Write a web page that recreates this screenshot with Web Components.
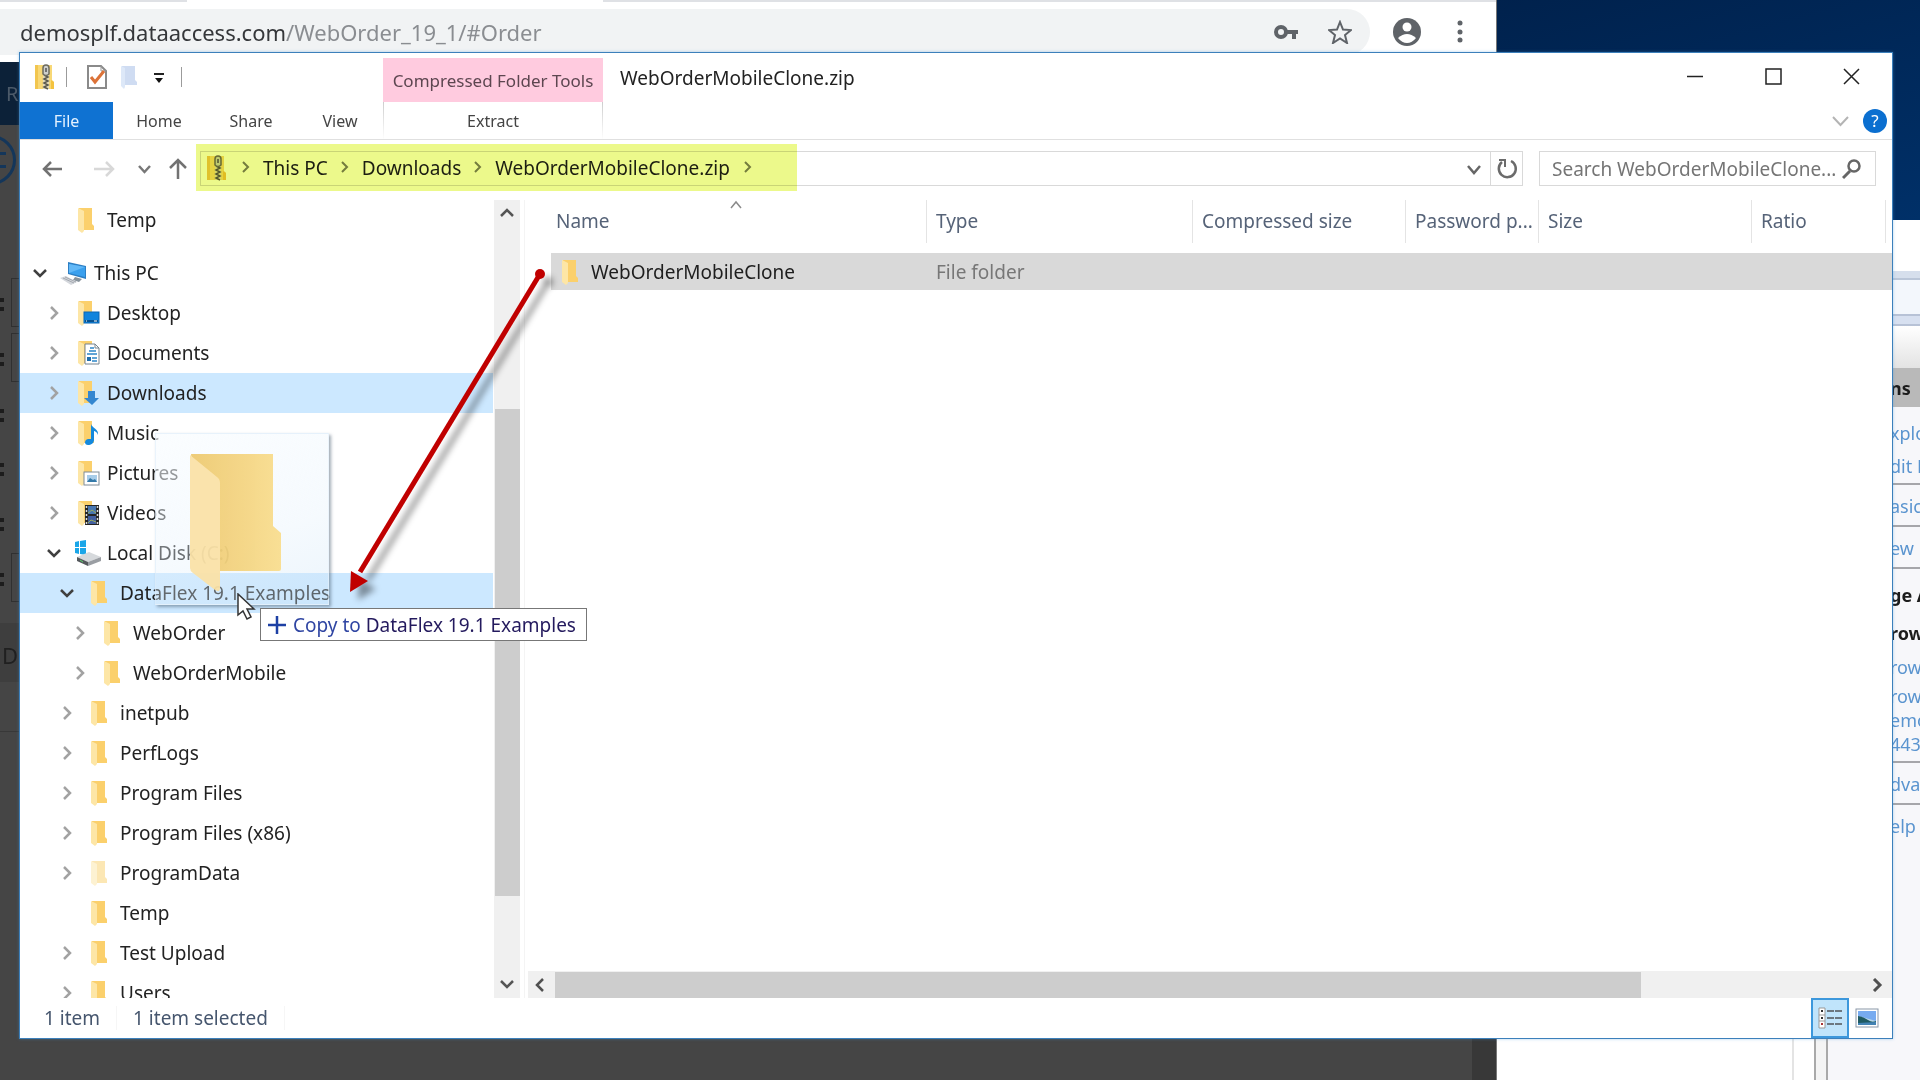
<!DOCTYPE html>
<html lang="en">
<head>
<meta charset="utf-8">
<title>WebOrderMobileClone.zip</title>
<style>
html, body { margin: 0; height: 100%; overflow: hidden; }
body { font-family: "Noto Sans", "Open Sans", sans-serif; font-size: 19px; line-height: 24px; color: #222; }
</style>
</head>
<body>
<desk-top></desk-top>
<script>
const define = (name, css, html) => {
  customElements.define(name, class extends HTMLElement {
    constructor() {
      super();
      const root = this.attachShadow({ mode: "open" });
      const t = document.createElement("template");
      t.innerHTML = `<style>*{box-sizing:border-box}button{font:inherit;color:inherit;background:none;border:0;padding:0;margin:0;text-align:left}:host{display:block}${css}</style>` + html;
      root.append(t.content.cloneNode(true));
    }
  });
};

const folderBase = `<path d="M4 1h13v16l2 2v4H4z" fill="#fbd06c"/><path d="M3 1l6 3v20l-2 2-4-3z" fill="#fde6a6"/>`;
const wrap = (w, h, s) => `<svg width="${w}" height="${h}" viewBox="0 0 ${w} ${h}" fill="none" aria-hidden="true">${s}</svg>`;
const zipShape = `<path d="M0 1h17v15l2 2v7H0z" fill="#f8d876"/><path d="M0 1h3v24H0z" fill="#f2c64f"/><path d="M16 16l3 2v7h-3z" fill="#f4c33f"/><path d="M8 3h6v22H8z" fill="#e6dcb8"/><path d="M9 11l4 2-4 2 4 2-4 2 4 2-4 2 4 2" stroke="#5c5a50" stroke-width="1.500"/><path d="M8 10V4q0-3 3-3t3 3v6q-3 3-6 0z" fill="#cfd0cc" stroke="#6e6c60" stroke-width="1.500"/><path d="M11 4v4" stroke="#555" stroke-width="1.500"/>`;
const icons = {
  folder: wrap(26, 26, folderBase),
  pale: wrap(26, 26, `<g opacity=".5">${folderBase}</g>`),
  desktop: wrap(26, 26, folderBase + `<rect x="9" y="12" width="15" height="11" fill="#0f84dd" stroke="#0a66b3"/><path d="M10 21h13" stroke="#07518f" stroke-width="2"/><path d="M11 21h1m7 0h3" stroke="#fff"/>`),
  documents: wrap(26, 26, folderBase + `<path d="M10 4h10l4 4v16H10z" fill="#fff" stroke="#77848f"/><path d="M20 4v4h4" stroke="#77848f"/><path d="M15 8h4m-5 3h7m-9 3h10m-5 4h5m-5 3h5" stroke="#2c87c9" stroke-width="1.500"/><rect x="12" y="17" width="4" height="4" fill="#1f6fae"/>`),
  downloads: wrap(26, 26, folderBase + `<path d="M13 11h7v7h4l-7 7-8-7h4z" fill="#3386d0"/>`),
  music: wrap(26, 26, folderBase + `<path d="M16 4c1 4 8 5 7 11-1-3-3-4-4-4v9c0 3-3 5-6 5-4 0-4-5 0-6l3 0z" fill="#1489dd"/>`),
  pictures: wrap(26, 26, folderBase + `<rect x="9" y="12" width="15" height="13" fill="#fff" stroke="#7f8b96"/><rect x="12" y="15" width="10" height="7" fill="#a8cde9"/><path d="M12 22l3-4 3 2 2-1 2 3z" fill="#357aa9"/>`),
  videos: wrap(26, 26, folderBase + `<rect x="10" y="5" width="14" height="20" fill="#252525"/><rect x="13" y="6" width="8" height="8" fill="#4876b0"/><rect x="13" y="16" width="8" height="8" fill="#425fa0"/><path d="M11.500 6v19M22.500 6v19" stroke="#ddd" stroke-width="1.500" stroke-dasharray="2 2"/><path d="M13 13l4-3 4 3M13 23l3-3 5 2" stroke="#98ad5c"/>`),
  pc: wrap(26, 26, `<path d="M8 2l18 4v13L8 14z" fill="#2d7fc4"/><path d="M9 4l16 3v10L9 13z" fill="#3aa0ee"/><path d="M9 4l16 3-16 6z" fill="#62b8f7"/><path d="M15 17l7 2-3 3-6-2z" fill="#87929b"/><path d="M0 18l6-2 11 6-6 3z" fill="#d4d7dc"/><path d="M3 18l11 5M5 17l11 5" stroke="#a4a9b0"/>`),
  disk: wrap(26, 26, `<path d="M0 2l4-1v6H0zM5 1l6-1v7H5zM0 8h4v6l-4-1zM5 8h6v7l-6-1z" fill="#1ba6e8"/><path d="M2 17l12-5 12 5-13 5z" fill="#d6d9dc"/><path d="M2 17l11 5v4L2 21z" fill="#55595d"/><path d="M13 22l13-5v4l-13 5z" fill="#9a9ea3"/><path d="M5 20l3 2" stroke="#57d36b"/>`),
  zip: wrap(20, 26, zipShape),
  none: "",
  right: wrap(16, 16, `<path d="M5 2l6 6-6 6" stroke="#a2a2a2" stroke-width="2.500"/>`),
  crumb: wrap(12, 14, `<path d="M3 1l5 5-5 5" stroke="#7d7f70" stroke-width="2"/>`),
  down: wrap(16, 16, `<path d="M2 5l6 6 6-6" stroke="#404040" stroke-width="2.500"/>`)
};
customElements.define("x-icon", class extends HTMLElement {
  constructor() { super(); this.attachShadow({ mode: "open" }); }
  connectedCallback() {
    this.shadowRoot.innerHTML = `<style>:host{display:inline-flex;flex:none}svg{display:block}</style>` + icons[this.getAttribute("name")];
  }
});

/* ---- browser window behind ---- */
define("web-browser", `
:host{display:flex;flex-direction:column;background:#454545;border-right:1px solid #777}
.strip{height:2px;background:linear-gradient(90deg,#dfe1e5 187px,#fff 187px 603px,#dfe1e5 603px)}
.bar{display:flex;align-items:center;height:60px;background:#fff;padding:0 28px 0 0}
.omni{flex:1;display:flex;align-items:center;height:46px;background:#f1f3f4;border-radius:0 23px 23px 0;padding:0 18px 0 20px;font-size:22px;line-height:32px;color:#8a8d91;gap:30px}
.omni a{color:inherit;text-decoration:none;flex:1}.omni b{font-weight:400;color:#35373a}
.omni svg,.tools svg{display:block}
.tools{display:flex;align-items:center;gap:31px;margin-left:23px}
.nav{height:63px;background:#0c2138;color:#4c5a69;font-size:20px;line-height:63px;padding-left:6px}
.page{flex:1;position:relative;color:#202020;font-weight:700;overflow:hidden}
.round{position:absolute;left:-34px;top:10px;width:50px;height:50px;border:3px solid #14365a;border-radius:50%}
.bars{position:absolute;left:0;top:27px;width:6px;height:16px;border:solid #14365a;border-width:3px 0}
.page i{position:absolute;left:0;width:4px;height:13px;border:solid #1c1c1c;border-width:4px 0}
.page u{position:absolute;left:11px;width:40px;border:1px solid #303030;height:49px}
.band{position:absolute;left:0;top:498px;width:20px;height:59px;background:#3e3e3e}
.line{position:absolute;left:0;top:606px;width:20px;height:1px;background:#383838}
.d{position:absolute;left:2px;top:516px;font-weight:400;font-size:22px;line-height:28px}
.side{position:absolute;right:0;top:0;bottom:0;width:24px;background:#383838}`,
`<div class="strip"></div>
<div class="bar"><div class="omni"><a href="#Order"><b>demosplf.dataaccess.com</b>/WebOrder_19_1/#Order</a>
${wrap(24, 24, `<circle cx="7" cy="12" r="5" stroke="#5f6368" stroke-width="4"/><path d="M12 12h12M20 12v7" stroke="#5f6368" stroke-width="4"/>`)}
${wrap(24, 24, `<path d="M12 2l3 7.500 8 .6-6 5 2 7.900-7-4.500L5 23l2-7.900-6-5 8-.6z" stroke="#5f6368" stroke-width="2"/>`)}
</div><div class="tools">
${wrap(28, 28, `<circle cx="14" cy="14" r="14" fill="#5f6368"/><circle cx="14" cy="9" r="4.500" fill="#fff"/><path d="M5 20q9-8 18 0-4 5-9 5t-9-5z" fill="#fff"/>`)}
${wrap(16, 28, `<circle cx="8" cy="5" r="2.500" fill="#5f6368"/><circle cx="8" cy="14" r="2.500" fill="#5f6368"/><circle cx="8" cy="22" r="2.500" fill="#5f6368"/>`)}
</div></div>
<div class="nav">R</div>
<div class="page"><div class="round"></div><div class="bars"></div>
${[173, 228, 284, 338, 393, 448].map(y => `<i style="top:${y}px"></i>`).join("")}
${[153, 208, 428].map(y => `<u style="top:${y}px"></u>`).join("")}
<div class="band"></div><div class="line"></div><div class="d">D</div><div class="side"></div></div>`);

/* ---- server manager window behind ---- */
define("action-pane", `
:host{display:flex;flex-direction:column;background:#fff;font-size:18px;line-height:24px;color:#5a94cf}
.cap{height:51px}.tool{height:9px;background:#d6dfec;border-bottom:2px solid #bac6d8}
.path{height:34px;background:#f3f7fc}.gap{height:12px;background:#d7e0f0;border:solid #b7c2d6;border-width:2px 0}
.body{flex:1;display:flex}
.center{flex:1;background:#fff;border-right:2px solid #e4e4e4;margin-right:20px}
.split{width:14px;background:#f4f4f4;border:solid #a9a9a9;border-width:0 2px}
.act{width:92px;background:#f7f7fa;display:flex;flex-direction:column}
.grad{height:42px;background:linear-gradient(#fff,#e3e3e3)}
.head{height:39px;background:#b9b9b9;line-height:41px;margin-bottom:10px}
.act>*{padding-left:62px;white-space:nowrap;overflow:hidden;flex:none}
.act a{color:inherit;text-decoration:none;display:block}
strong{color:#1c1c1c;display:block}
.sep{border-top:2px solid #a6a6aa}
.tall{height:42px;line-height:42px}.mid{height:33px;line-height:33px}
.sub{height:54px;line-height:52px}.brow{margin-bottom:6px}
.last{margin-bottom:5px}`,
`<div class="cap"></div><div class="tool"></div><div class="path"></div><div class="gap"></div>
<div class="body"><div class="center"></div><div class="split"></div>
<div class="act"><div class="grad"></div><strong class="head">ns</strong>
<a class="mid" href="#e">xplo</a><a class="mid" href="#p">dit P</a>
<a class="tall sep" href="#b">asic</a><a class="tall sep" href="#v">ew</a>
<strong class="sub sep">ge A</strong><strong class="brow">row</strong>
<a class="mid" href="#1">row</a><a href="#2">row</a><a href="#2">emo</a><a class="last" href="#2">443</a>
<a class="tall sep" href="#a">dva</a><a class="tall sep" href="#h">elp</a></div></div>`);

/* ---- explorer ---- */
define("ribbon-bar", `
:host{border-bottom:1px solid #e0e0e0}
.title{display:flex;height:49px}
.quick{width:363px;display:flex;align-items:center;padding:0 0 2px 15px}
.quick i{width:1px;height:20px;background:#9b9b9b;flex:none}
.quick i:first-of-type{margin:0 19px 0 11px}.quick i:last-of-type{margin-left:16px}
.quick .new{margin:0 15px 0 12px}
.tool{width:220px;background:#ffcbdf;margin-top:5px;font-size:17px;line-height:46px;text-align:center;color:#5d4650}
h1{flex:1;margin:0 0 0 17px;font:inherit;line-height:50px;color:#222}
.win{display:flex;align-items:center;padding:0 32px 0 0;gap:61px}
.tabs{display:flex;height:37px;font-size:16px;color:#444}
.tabs button{width:92px;text-align:center;line-height:38px}
.tabs .file{width:93px;background:#0f72d2;color:#e4f2ff}.tabs .v{width:86px}
.tabs .x{width:220px;border:solid;border-width:0 1px;border-image:linear-gradient(#ccc,#fff) 1}
.help{margin-left:auto;display:flex;align-items:center;gap:14px;padding-right:5px}
.help b{display:block;width:24px;height:24px;border-radius:50%;background:#0b6fd0;color:#fff;font-size:17px;line-height:24px;text-align:center;font-weight:400}`,
`<div class="title"><div class="quick"><x-icon name="zip"></x-icon><i></i>
${wrap(22, 26, `<path d="M2 2h13l5 5v17H2z" fill="#fff" stroke="#8a8a8a" stroke-width="2"/><path d="M15 2v5h5" stroke="#999"/><path d="M5 13l4 5 9-11" stroke="#dc7238" stroke-width="3"/>`)}
<svg class="new" width="18" height="26" viewBox="0 0 18 26"><path d="M2 2h13v14l2 2v3H2z" fill="#cfdcf2"/><path d="M1 2l4 2v19l-1 2-3-3z" fill="#dde8f8"/></svg>
${wrap(12, 14, `<path d="M1 4h10" stroke="#222" stroke-width="2"/><path d="M2 8h8l-4 5z" fill="#111"/>`)}
<i></i></div>
<div class="tool">Compressed Folder Tools</div><h1>WebOrderMobileClone.zip</h1>
<div class="win"><button aria-label="Minimize">${wrap(17, 17, `<path d="M0 8.500h16" stroke="#222" stroke-width="1.500"/>`)}</button>
<button aria-label="Maximize">${wrap(17, 17, `<rect x="1" y="1" width="15" height="15" stroke="#222" stroke-width="1.500"/>`)}</button>
<button aria-label="Close">${wrap(17, 17, `<path d="M1 1l15 15M16 1L1 16" stroke="#222" stroke-width="1.500"/>`)}</button></div></div>
<div class="tabs"><button class="file">File</button><button>Home</button><button>Share</button><button class="v">View</button><button class="x">Extract</button>
<div class="help">${wrap(17, 12, `<path d="M1 2l7.500 8L16 2" stroke="#b4b4b4" stroke-width="2"/>`)}<b>?</b></div></div>`);

define("address-bar", `
:host{display:flex;align-items:flex-start;padding:11px 16px 13px 21px;position:relative}
.nav{display:flex;align-items:center;height:36px;width:159px}
.nav svg{display:block}
.fwd{margin-left:31px}.rec{margin-left:22px}.up{margin-left:17px}
.box{flex:1;display:flex;height:35px;border:1px solid #d9d9d9;align-items:center}
.crumbs{display:flex;align-items:center;padding-left:6px;color:#1e1e1e;flex:1;line-height:30px;padding-bottom:2px}
.crumbs x-icon{margin:0 11px}
.crumbs x-icon:first-child{margin:0 2px 0 0}
.crumbs x-icon:last-child{margin-left:12px}
.drop{width:33px;text-align:center}.ref{width:32px;height:33px;border-left:1px solid #d9d9d9;display:flex;align-items:center;justify-content:center}
label{display:flex;align-items:center;width:337px;height:35px;border:1px solid #d9d9d9;margin-left:16px;padding-right:13px}
input{flex:1;min-width:0;border:0;outline:0;background:none;font:inherit;padding:0 0 0 12px}
input::placeholder{color:#757575;opacity:1}
.mark{position:absolute;left:176px;top:4px;width:601px;height:47px;background:#ecf98b;mix-blend-mode:multiply}`,
`<div class="nav"><button aria-label="Back">${wrap(22, 20, `<path d="M21 10H3M10 3l-7 7 7 7" stroke="#727272" stroke-width="2.500"/>`)}</button>
<button aria-label="Forward" class="fwd">${wrap(22, 20, `<path d="M0 10h19M12 3l7 7-7 7" stroke="#d8d8d8" stroke-width="2.500"/>`)}</button>
<button aria-label="Recent" class="rec">${wrap(13, 12, `<path d="M1 3l5.500 6L12 3" stroke="#777" stroke-width="2.500"/>`)}</button>
<button aria-label="Up" class="up">${wrap(20, 24, `<path d="M10 22V3M2 11l8-8 8 8" stroke="#727272" stroke-width="2.500"/>`)}</button></div>
<div class="box"><div class="crumbs"><x-icon name="zip"></x-icon><x-icon name="crumb"></x-icon>This PC<x-icon name="crumb"></x-icon>Downloads<x-icon name="crumb"></x-icon>WebOrderMobileClone.zip<x-icon name="crumb"></x-icon></div>
<button class="drop" aria-label="History">${wrap(20, 14, `<path d="M4 4l6 7 6-7" stroke="#666" stroke-width="2.500"/>`)}</button>
<button class="ref" aria-label="Refresh">${wrap(22, 24, `<path d="M15 4a8.500 8.500 0 1 1-9 1" stroke="#6b6b6b" stroke-width="2.500"/><path d="M3 3h6v7" stroke="#6b6b6b" stroke-width="2"/>`)}</button></div>
<label><input type="text" aria-label="Search" placeholder="Search WebOrderMobileClone...">${wrap(20, 22, `<circle cx="12" cy="8" r="5.500" stroke="#666" stroke-width="2.500"/><path d="M8 13l-7 7" stroke="#666" stroke-width="3"/>`)}</label>
<div class="mark"></div>`);

customElements.define("tree-row", class extends HTMLElement {
  constructor() { super(); this.attachShadow({ mode: "open" }); }
  connectedCallback() {
    const lvl = +this.getAttribute("level");
    const sel = this.hasAttribute("selected");
    this.shadowRoot.innerHTML = `<style>
:host{display:block;flex:none}
button{display:flex;align-items:center;width:100%;height:40px;border:0;margin:0;background:${sel ? "#cce8ff" : "none"};font:inherit;color:#222;padding:0 0 0 ${(lvl ? 13 : 12) + 13 * lvl}px;text-align:left}
.c{width:16px;height:16px;margin-right:${lvl ? 13 : 12}px}.t{margin-left:${lvl ? 6 : 8}px;padding-bottom:1px}
.i{width:26px}</style>
<button><x-icon class="c" name="${this.getAttribute("open")}"></x-icon><x-icon class="i" name="${this.getAttribute("icon")}"></x-icon><span class="t"><slot></slot></span></button>`;
  }
});

const rows = [
  [1, "none", "folder", "Temp"], [0, "down", "pc", "This PC"], [1, "right", "desktop", "Desktop"],
  [1, "right", "documents", "Documents"], [1, "right", "downloads", "Downloads", 1], [1, "right", "music", "Music"],
  [1, "right", "pictures", "Pictures"], [1, "right", "videos", "Videos"], [1, "down", "disk", "Local Disk (C:)"],
  [2, "down", "folder", "DataFlex 19.1 Examples", 1], [3, "right", "folder", "WebOrder"], [3, "right", "folder", "WebOrderMobile"],
  [2, "right", "folder", "inetpub"], [2, "right", "folder", "PerfLogs"], [2, "right", "folder", "Program Files"],
  [2, "right", "folder", "Program Files (x86)"], [2, "right", "pale", "ProgramData"], [2, "none", "folder", "Temp"],
  [2, "right", "folder", "Test Upload"], [2, "right", "folder", "Users"]];
define("folder-tree", `
:host{display:flex;width:505px;flex:none;border-right:1px solid #f4f4f4}
nav{flex:1;overflow:hidden;display:flex;flex-direction:column}
.gap{margin-bottom:13px}
.bar{width:26px;margin:0 4px 0 1px;background:#f0f0f0;display:flex;flex-direction:column;align-items:center}
.bar svg{display:block}.thumb{width:25px;flex:488 0 0;background:#cdcdcd}
.a{flex:210 0 0;display:flex;align-items:flex-start}
.b{flex:102 0 0;display:flex;align-items:flex-end}
.bar svg{margin:6px 0}`,
`<nav>${rows.map((r, i) => `<tree-row level="${r[0]}" open="${r[1]}" icon="${r[2]}"${r[4] ? " selected" : ""}${i ? "" : ' class="gap"'}>${r[3]}</tree-row>`).join("")}</nav>
<div class="bar"><div class="a">${wrap(14, 14, `<path d="M1 10l6-6 6 6" stroke="#555" stroke-width="2.500"/>`)}</div><div class="thumb"></div><div class="b">${wrap(14, 16, `<path d="M1 5l6 6 6-6" stroke="#555" stroke-width="2.500"/>`)}</div></div>`);

define("file-list", `
:host{display:flex;flex-direction:column;flex:1;min-width:0}
.view{flex:1;padding-left:26px}
table{width:100%;border-collapse:collapse;table-layout:fixed}
th{font-weight:400;text-align:left;padding:0 0 10px;color:#566378;white-space:nowrap}
th div{height:43px;line-height:43px;padding-left:9px;border-right:1px solid #e4e4e4;position:relative}
th:first-child div{padding-left:5px}
th:last-child div{margin-right:6px}
th svg{position:absolute;left:178px;top:0}
td{height:37px;padding:0 0 0 9px;background:#d9d9d9;color:#777;white-space:nowrap}
td:first-child{padding-left:8px;color:#1e1e1e}
td span{display:flex;align-items:center;gap:6px}
.bar{display:flex;height:27px;margin-left:3px;background:#f0f0f0;align-items:center;padding:0 8px 0 5px}
.bar div{height:26px;background:#cdcdcd;flex:1088;margin-left:8px}.bar p{flex:229;margin:0}.bar svg{flex:none}`,
`<div class="view"><table><colgroup><col style="width:376px"><col style="width:266px"><col style="width:213px"><col style="width:133px"><col style="width:213px"><col></colgroup>
<thead><tr><th><div>Name${wrap(14, 10, `<path d="M2 8l5-6 5 6" stroke="#8a8a8a" stroke-width="1.500"/>`)}</div></th><th><div>Type</div></th><th><div>Compressed size</div></th><th><div>Password p...</div></th><th><div>Size</div></th><th><div>Ratio</div></th></tr></thead>
<tbody><tr><td><span><x-icon name="folder"></x-icon>WebOrderMobileClone</span></td><td>File folder</td><td></td><td></td><td></td><td></td></tr></tbody></table></div>
<div class="bar">${wrap(14, 14, `<path d="M10 1L4 7l6 6" stroke="#505050" stroke-width="2.500"/>`)}<div></div><p></p>${wrap(14, 14, `<path d="M4 1l6 6-6 6" stroke="#505050" stroke-width="3"/>`)}</div>`);

define("status-bar", `
:host{display:flex;align-items:center;height:40px;padding:0 12px 0 24px;color:#46566e}
span{border-right:1px solid #f6f6f6;padding-right:16px;margin-right:16px}
.g{flex:1}button svg{display:block}
.on{width:38px;height:40px;background:#c0e4fb;border:2px solid #3d98dc;display:flex;align-items:center;justify-content:center;margin-right:5px}`,
`<span>1 item</span><span>1 item selected</span><div class="g"></div>
<button class="on" aria-label="Details">${wrap(26, 24, `<path d="M2 2h6v20H2zM2 9h6M2 15h6" fill="#fff" stroke="#999"/><path d="M4 5h2M4 12h2" stroke="#333" stroke-width="2"/><path d="M4 18h2" stroke="#a33" stroke-width="2"/><path d="M10 5h7m1 0h7M10 12h7m1 0h7M10 18h7m1 0h7" stroke="#6c7780" stroke-width="2"/>`)}</button>
<button aria-label="Large icons">${wrap(26, 20, `<rect x="2" y="1" width="22" height="18" fill="#fff" stroke="#8a97a8"/><rect x="4" y="3" width="18" height="14" fill="#77abf0"/><path d="M4 8q8 2 18 5v4H4z" fill="#b8d6e8"/><path d="M4 8q6 1 10 4t8 1v4H4z" fill="#1f5a62"/><path d="M4 15l18-1v3H4z" fill="#4383b4"/>`)}</button>`);

define("file-explorer", `
:host{display:flex;flex-direction:column;background:#fff;border:1px solid #3c80bb;box-shadow:0 0 3px rgba(60,150,220,.4)}
.main{flex:1;display:flex;min-height:0}`,
`<ribbon-bar></ribbon-bar><address-bar></address-bar><div class="main"><folder-tree></folder-tree><file-list></file-list></div><status-bar></status-bar>`);

/* ---- drag feedback ---- */
define("drag-ghost", `
:host{background:linear-gradient(160deg,rgba(248,252,255,.65),rgba(228,241,252,.35) 60%,rgba(200,226,246,.35));border:1px solid rgba(225,238,250,.6);box-shadow:2px 2px 3px rgba(70,90,110,.5)}
svg{display:block;margin:20px 0 0 33px}`,
wrap(96, 146, `<defs><linearGradient id="f" x1="0" x2="1"><stop offset="0" stop-color="#eec96f"/><stop offset="1" stop-color="#f9dd8d"/></linearGradient></defs><g opacity=".93"><path d="M2 0h82v72l8 7v36q0 2-2 2H14z" fill="url(#f)"/><path d="M1 1l27 22q3 2 3 6v105q0 5-5 2L4 119q-3-2-3-5z" fill="#fbe2a6"/></g>`));
define("drop-tip", `
:host{display:flex;align-items:center;gap:6px;height:33px;padding:0 10px 0 6px;background:#fff;border:1px solid #777;color:#241a5e;white-space:nowrap;line-height:30px}
b{font-weight:400;color:#3046a3}`,
`${wrap(20, 20, `<path d="M10 1v18M1 10h18" stroke="#1d40a4" stroke-width="2.500"/>`)}<span><b>Copy to</b> DataFlex 19.1 Examples</span>`);
define("pointer-arrow", `svg{display:block}`,
wrap(20, 28, `<path d="M1 1v21l5-4 4 8 4-2-4-8h7z" fill="#fff" stroke="#333" stroke-width="1.500"/>`));
define("red-arrow", `svg{display:block;overflow:visible;filter:drop-shadow(8px 8px 3px rgba(0,0,0,.4))}`,
wrap(200, 330, `<path d="M192 8L12 306" stroke="#c00000" stroke-width="5"/><circle cx="192" cy="8" r="5" fill="#c00000"/><path d="M2 326l1-21 17 10z" fill="#c00000"/>`));

define("desk-top", `
:host{position:relative;height:100vh;overflow:hidden;background:linear-gradient(165deg,#001838,#00204a 50%,#003068) 0 0/100% 220px #002a5a}
.w{position:absolute}
web-browser{left:0;top:0;bottom:0;width:1497px}
action-pane{left:1497px;right:0;top:220px;bottom:0}
file-explorer{left:19px;right:27px;top:52px;bottom:41px}
drag-ghost{left:155px;top:433px;width:174px;height:172px}
red-arrow{left:348px;top:266px}
drop-tip{left:260px;top:608px}
pointer-arrow{left:237px;top:593px}`,
`<action-pane class="w"></action-pane><web-browser class="w"></web-browser><file-explorer class="w"></file-explorer><drag-ghost class="w"></drag-ghost><drop-tip class="w"></drop-tip><pointer-arrow class="w"></pointer-arrow><red-arrow class="w"></red-arrow>`);
</script>
</body>
</html>
